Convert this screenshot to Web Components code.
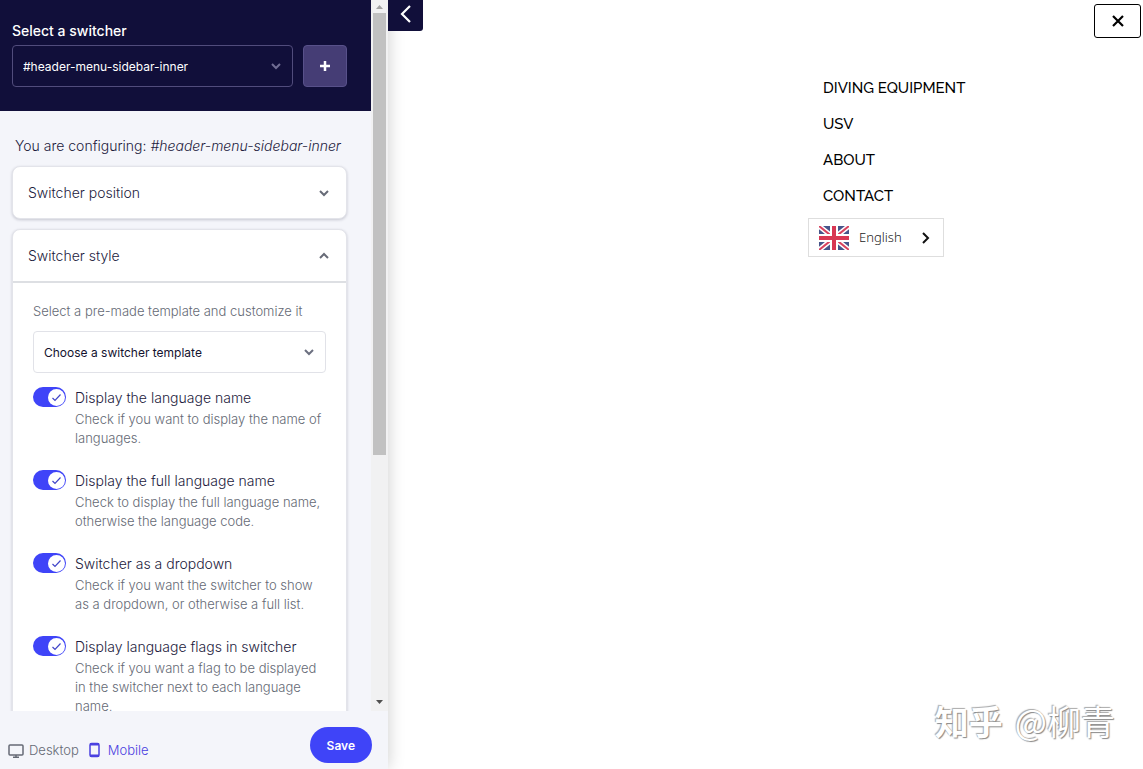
<!DOCTYPE html>
<html lang="en">
<head>
<meta charset="utf-8">
<meta name="viewport" content="width=device-width, initial-scale=1">
<title>Switcher editor</title>
<style>
body {
    margin: 0;
    font-family: Inter, "Liberation Sans", sans-serif;
    font-size: 14px;
    font-weight: 300;
    color: #1d1b3d;
    background: #fff;
}
</style>
</head>
<body>
<switcher-editor>
    <editor-sidebar slot="sidebar">
        <sidebar-header slot="header">
            <select-field label="Select a switcher" option="#header-menu-sidebar-inner" tone="dark"></select-field>
        </sidebar-header>
        <config-title>#header-menu-sidebar-inner</config-title>
        <option-card heading="Switcher position"></option-card>
        <option-card heading="Switcher style" open>
            <select-field label="Select a pre-made template and customize it" option="Choose a switcher template"></select-field>
            <toggle-option heading="Display the language name">Check if you want to display the name of languages.</toggle-option>
            <toggle-option heading="Display the full language name">Check to display the full language name, otherwise the language code.</toggle-option>
            <toggle-option heading="Switcher as a dropdown">Check if you want the switcher to show as a dropdown, or otherwise a full list.</toggle-option>
            <toggle-option heading="Display language flags in switcher">Check if you want a flag to be displayed in the switcher next to each language name.</toggle-option>
        </option-card>
        <sidebar-footer slot="footer"></sidebar-footer>
    </editor-sidebar>
    <site-preview slot="preview">
        <a href="#diving">DIVING EQUIPMENT</a>
        <a href="#usv">USV</a>
        <a href="#about">ABOUT</a>
        <a href="#contact">CONTACT</a>
        <language-switcher slot="language">English</language-switcher>
    </site-preview>
    <author-mark slot="mark"></author-mark>
</switcher-editor>

<script>
// attach an open shadow root filled with the given markup
function render(el, html) {
  const template = document.createElement("template");
  template.innerHTML = html;
  el.attachShadow({ mode: "open" }).append(template.content.cloneNode(true));
}

class SwitcherEditor extends HTMLElement {
  constructor() {
    super();
    render(this, `
<style>
:host {
    display: flex;
    position: relative;
    height: 100vh;
    overflow: hidden;
}
</style>
<slot name="sidebar"></slot>
<slot name="preview"></slot>
<slot name="mark"></slot>
`);
  }
}

class EditorSidebar extends HTMLElement {
  constructor() {
    super();
    render(this, `
<style>
:host {
    display: flex;
    flex-direction: column;
    flex: 0 0 388px;
    position: relative;
    z-index: 1;
    background: #f4f5fa;
    box-shadow: 0 0 16px rgba(0, 0, 0, 0.2);
}
.body {
    display: flex;
    flex: 1;
    min-height: 0;
}
.scroll {
    flex: 1;
    min-width: 0;
    overflow-y: auto;
    scrollbar-width: none;
}
.content {
    display: flex;
    flex-direction: column;
    gap: 10px;
    padding: 25px 24px 24px 12px;
}
</style>
<div class="body">
    <div class="scroll">
        <slot name="header"></slot>
        <div class="content"><slot></slot></div>
    </div>
    <scroll-rail></scroll-rail>
</div>
<slot name="footer"></slot>
`);
  }

  connectedCallback() {
    const scroll = this.shadowRoot.querySelector(".scroll");
    this.shadowRoot.addEventListener("rail-step", (e) => {
      scroll.scrollBy({ top: e.detail });
    });
  }
}

class ScrollRail extends HTMLElement {
  constructor() {
    super();
    render(this, `
<style>
:host {
    display: flex;
    flex-direction: column;
    flex: 0 0 17px;
    background: #f1f1f2;
}
button {
    display: flex;
    align-items: center;
    justify-content: center;
    height: 13px;
    padding: 0;
    border: 0;
    background: none;
}
button:last-child {
    height: 18px;
}
.track {
    flex: 1;
    padding: 0 2px;
}
.thumb {
    height: 65%;
    background: #c1c1c1;
}
</style>
<button type="button" data-step="-40" aria-label="Scroll up"><svg width="7" height="4"><path d="M0 4 3.500 0 7 4Z" fill="#a3a3a3"/></svg></button>
<div class="track"><div class="thumb"></div></div>
<button type="button" data-step="40" aria-label="Scroll down"><svg width="7" height="4"><path d="M0 0h7L3.500 4Z" fill="#505050"/></svg></button>
`);
  }

  connectedCallback() {
    this.shadowRoot.querySelectorAll("button").forEach((button) => {
      button.addEventListener("click", () => {
        this.dispatchEvent(new CustomEvent("rail-step", { detail: Number(button.dataset.step), bubbles: true }));
      });
    });
  }
}

class SidebarHeader extends HTMLElement {
  constructor() {
    super();
    render(this, `
<style>
:host {
    display: flex;
    align-items: flex-end;
    gap: 10px;
    padding: 21px 24px 24px 12px;
    background: #110f3a;
    color: #fff;
}
::slotted(select-field) {
    flex: 1;
}
button {
    display: flex;
    align-items: center;
    justify-content: center;
    width: 44px;
    height: 42px;
    padding: 0;
    border: 1px solid #58518a;
    border-radius: 4px;
    background: #453d75;
}
</style>
<slot></slot>
<button type="button" aria-label="Add a switcher">
    <svg width="12" height="12" fill="none" stroke="#fff" stroke-width="2.500"><path d="M6 1v10M1 6h10"/></svg>
</button>
`);
  }
}

class SelectField extends HTMLElement {
  constructor() {
    super();
    render(this, `
<style>
:host {
    display: block;
}
label {
    display: block;
    margin-bottom: 10px;
    font-size: 13px;
    line-height: 20px;
    color: #656a75;
}
.box {
    display: grid;
    align-items: center;
}
select, svg {
    grid-area: 1 / 1;
}
select {
    appearance: none;
    width: 100%;
    height: 42px;
    padding: 0 32px 0 10px;
    border: 1px solid #e1e2e8;
    border-radius: 4px;
    background: #fff;
    color: #14122f;
    font-family: inherit;
    font-size: 12px;
    font-weight: 400;
}
svg {
    justify-self: end;
    margin-right: 12px;
    color: #6c7080;
    pointer-events: none;
}
:host([tone="dark"]) label {
    margin-bottom: 4px;
    font-size: 14px;
    font-weight: 500;
    color: #fff;
}
:host([tone="dark"]) select {
    border-color: #514c7c;
    background: #110f3a;
    color: #fff;
}
:host([tone="dark"]) svg {
    color: #706d93;
}
</style>
<label for="field"></label>
<div class="box">
    <select id="field"><option></option></select>
    <svg width="10" height="8" fill="none" stroke="currentColor" stroke-width="2"><path d="M1 2 5 6 9 2"/></svg>
</div>
`);
  }

  connectedCallback() {
    this.shadowRoot.querySelector("label").textContent = this.getAttribute("label");
    this.shadowRoot.querySelector("option").textContent = this.getAttribute("option");
  }
}

class ConfigTitle extends HTMLElement {
  constructor() {
    super();
    render(this, `
<style>
:host {
    display: block;
    padding-left: 3px;
    line-height: 20px;
    white-space: nowrap;
}
</style>
You are configuring: <em><slot></slot></em>
`);
  }
}

class OptionCard extends HTMLElement {
  constructor() {
    super();
    render(this, `
<style>
:host {
    display: block;
    border-radius: 8px;
    border: 1px solid #e3e4ea;
    background: #fff;
    box-shadow: 0 1px 3px rgba(20, 20, 50, 0.2);
}
h2 {
    margin: 0;
}
button {
    display: flex;
    align-items: center;
    justify-content: space-between;
    width: 100%;
    height: 51px;
    padding: 0 17px 0 15px;
    border: 0;
    background: none;
    color: inherit;
    font: inherit;
    font-size: 14px;
    font-weight: 300;
}
svg {
    color: #676b77;
}
.content {
    display: none;
    padding: 18px 20px 22px;
    border-top: 2px solid #dddfe3;
}
:host([open]) svg {
    transform: rotate(180deg);
}
:host([open]) .content {
    display: block;
}
</style>
<h2><button type="button"><span></span><svg width="10" height="8" fill="none" stroke="currentColor" stroke-width="2"><path d="M1 2 5 6 9 2"/></svg></button></h2>
<div class="content"><slot></slot></div>
`);
  }

  connectedCallback() {
    const button = this.shadowRoot.querySelector("button");
    button.querySelector("span").textContent = this.getAttribute("heading");
    button.setAttribute("aria-expanded", this.hasAttribute("open"));
    button.addEventListener("click", () => {
      this.toggleAttribute("open");
      button.setAttribute("aria-expanded", this.hasAttribute("open"));
    });
  }
}

class ToggleOption extends HTMLElement {
  constructor() {
    super();
    render(this, `
<style>
:host {
    display: grid;
    grid-template-columns: 33px 1fr;
    column-gap: 9px;
    row-gap: 1px;
    margin: 14px 0 22px;
}
:host(:not(:first-of-type)) {
    margin-top: 0;
}
.switch {
    display: grid;
    align-items: center;
    width: 33px;
    height: 20px;
}
input, svg {
    grid-area: 1 / 1;
}
input {
    appearance: none;
    width: 33px;
    height: 20px;
    margin: 0;
    border-radius: 10px;
    background: #b9bcc9;
}
input:checked {
    background: #3f44f8;
}
svg {
    margin-left: 2px;
    pointer-events: none;
}
input:checked + svg {
    margin-left: 15px;
}
label {
    line-height: 22px;
}
p {
    grid-column: 2;
    margin: 0;
    font-size: 13px;
    line-height: 19px;
    color: #656a75;
}
</style>
<div class="switch">
    <input type="checkbox" id="toggle" checked>
    <svg width="17" height="17"><circle cx="8.500" cy="8.500" r="8.500" fill="#fff"/><path d="m4.500 9 2.500 2.500 5.500-6" fill="none" stroke="#4044c8" stroke-width="1.200"/></svg>
</div>
<label for="toggle"></label>
<p><slot></slot></p>
`);
  }

  connectedCallback() {
    this.shadowRoot.querySelector("label").textContent = this.getAttribute("heading");
  }
}

class SidebarFooter extends HTMLElement {
  constructor() {
    super();
    render(this, `
<style>
:host {
    display: flex;
    align-items: flex-end;
    justify-content: space-between;
    height: 52px;
    padding: 0 16px 6px 8px;
}
.devices {
    display: flex;
    gap: 10px;
    padding-bottom: 3px;
}
button {
    font-family: inherit;
    font-size: 13px;
    border: 0;
}
.devices button {
    display: flex;
    align-items: center;
    gap: 5px;
    height: 20px;
    padding: 0;
    background: none;
    color: #656a75;
    font-weight: 300;
}
.devices .active {
    gap: 8px;
    color: #4a40e0;
}
.save {
    height: 36px;
    padding: 0 17px;
    border-radius: 18px;
    background: #3f44f8;
    color: #fff;
    font-size: 12px;
    font-weight: 600;
}
</style>
<div class="devices">
    <button type="button">
        <svg width="16" height="16" fill="none" stroke="currentColor" stroke-width="1.500"><rect x="1" y="3" width="14" height="10" rx="1"/><path d="M8 13v2M5 15.250h6"/></svg>
        Desktop
    </button>
    <button type="button" class="active" aria-pressed="true">
        <svg width="11" height="16"><rect x="1" y="1.500" width="9" height="13" rx="1.500" fill="none" stroke="currentColor" stroke-width="1.500"/><path d="M1 1h9v2.500H1zM1 12.500h9V15H1z" fill="currentColor"/></svg>
        Mobile
    </button>
</div>
<button type="button" class="save">Save</button>
`);
  }
}

class SitePreview extends HTMLElement {
  constructor() {
    super();
    render(this, `
<style>
:host {
    display: flex;
    align-items: flex-start;
    justify-content: space-between;
    flex: 1;
    position: relative;
    z-index: 2;
    min-width: 0;
}
button {
    display: flex;
    align-items: center;
    justify-content: center;
    padding: 0;
}
.collapse {
    width: 35px;
    height: 31px;
    padding-bottom: 3px;
    border: 0;
    border-radius: 0 0 3px 0;
    background: #110f3a;
}
aside {
    display: flex;
    flex-direction: column;
    align-items: flex-start;
    width: 335px;
}
.close {
    align-self: flex-end;
    width: 47px;
    height: 34px;
    margin: 4px 2px 32px;
    border: 1px solid #000;
    border-radius: 3px;
    background: #fff;
}
nav {
    display: flex;
    flex-direction: column;
    margin-bottom: 4px;
    padding-left: 15px;
}
::slotted(a) {
    font-family: Raleway, Lato, sans-serif;
    font-size: 15px;
    font-weight: 500;
    line-height: 36px;
    color: #000;
    text-decoration: none;
}
</style>
<button type="button" class="collapse" aria-label="Collapse the panel">
    <svg width="12" height="18" fill="none" stroke="#fff" stroke-width="2.200"><path d="m10 1-8 8 8 8"/></svg>
</button>
<aside>
    <button type="button" class="close" aria-label="Close menu">
        <svg width="12" height="12" fill="none" stroke="#000" stroke-width="2.200"><path d="m1 1 10 10M11 1 1 11"/></svg>
    </button>
    <nav><slot></slot></nav>
    <slot name="language"></slot>
</aside>
`);
  }
}

class LanguageSwitcher extends HTMLElement {
  constructor() {
    super();
    render(this, `
<style>
:host {
    display: block;
}
button {
    display: flex;
    align-items: center;
    height: 39px;
    padding: 0 13px 0 10px;
    border: 1px solid #dedede;
    background: #fff;
    color: #222;
    font-family: "Noto Sans", "Open Sans", sans-serif;
    font-size: 13px;
    font-weight: 300;
}
span {
    margin: 0 20px 2px 10px;
}
</style>
<button type="button" aria-haspopup="listbox">
    <svg width="30" height="24" viewBox="0 0 30 24">
        <path fill="#47558a" d="M0 0h30v24H0z"/>
        <path stroke="#fff" stroke-width="5" d="m0 0 30 24M30 0 0 24"/>
        <path stroke="#d8435f" stroke-width="2" d="m0 0 12 9.600M30 0 18 9.600M0 24l12-9.600M30 24l-12-9.600"/>
        <path stroke="#fff" stroke-width="8" d="M15 0v24M0 12h30"/>
        <path stroke="#d83753" stroke-width="4" d="M15 0v24M0 12h30"/>
    </svg>
    <span><slot></slot></span>
    <svg width="8" height="12" fill="none" stroke="#111" stroke-width="2"><path d="m1 1 5 5-5 5"/></svg>
</button>
`);
  }
}

class AuthorMark extends HTMLElement {
  constructor() {
    super();
    render(this, `
<style>
:host {
    position: absolute;
    right: 28px;
    bottom: 24px;
    z-index: 3;
    display: flex;
    gap: 12px;
    color: #fff;
    font-family: "Noto Sans CJK SC", sans-serif;
    font-size: 34px;
    font-weight: 400;
    line-height: 48px;
    text-shadow: 1px 1px 1px #888, -1px -1px 1px #aaa;
}
b {
    font-weight: 700;
}
</style>
<b>知乎</b><span>@柳青</span>
`);
  }
}

customElements.define("switcher-editor", SwitcherEditor);
customElements.define("editor-sidebar", EditorSidebar);
customElements.define("scroll-rail", ScrollRail);
customElements.define("sidebar-header", SidebarHeader);
customElements.define("select-field", SelectField);
customElements.define("config-title", ConfigTitle);
customElements.define("option-card", OptionCard);
customElements.define("toggle-option", ToggleOption);
customElements.define("sidebar-footer", SidebarFooter);
customElements.define("site-preview", SitePreview);
customElements.define("language-switcher", LanguageSwitcher);
customElements.define("author-mark", AuthorMark);
</script>
</body>
</html>
